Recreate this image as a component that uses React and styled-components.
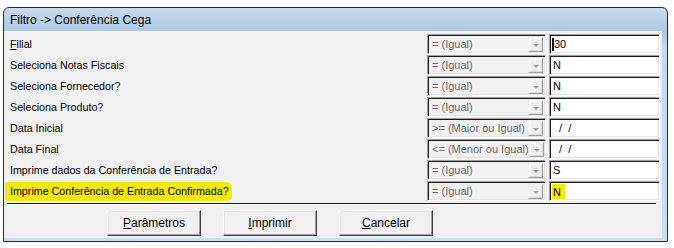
import styled, { createGlobalStyle } from "styled-components";

const GlobalStyle = createGlobalStyle`
    body {
        margin: 0;
        background: #ffffff;
        font-family: "Liberation Sans", Arial, sans-serif;
    }
`

const filtros = [
    { label: "Filial", atalho: "F", operador: "= (Igual)", valor: "30", cursor: true },
    { label: "Seleciona Notas Fiscais", operador: "= (Igual)", valor: "N" },
    { label: "Seleciona Fornecedor?", operador: "= (Igual)", valor: "N" },
    { label: "Seleciona Produto?", operador: "= (Igual)", valor: "N" },
    { label: "Data Inicial", operador: ">= (Maior ou Igual)", valor: "  /  /" },
    { label: "Data Final", operador: "<= (Menor ou Igual)", valor: "  /  /" },
    { label: "Imprime dados da Conferência de Entrada?", operador: "= (Igual)", valor: "S" },
    { label: "Imprime Conferência de Entrada Confirmada?", operador: "= (Igual)", valor: "N", marcado: true },
]

function Sublinhado({ texto }) {
    return <><u>{texto[0]}</u>{texto.slice(1)}</>
}

export default function App() {
    return (
        <>
            <GlobalStyle />
            <Janela>
                <Titulo>Filtro -&gt; Conferência Cega</Titulo>
                <Corpo>
                    <Grade>
                        {filtros.map((f) => (
                            <Linha key={f.label}>
                                <Rotulo marcado={f.marcado}>
                                    {f.atalho ? <Sublinhado texto={f.label} /> : f.label}
                                </Rotulo>
                                <Combo>
                                    <span>{f.operador}</span>
                                    <Seta />
                                </Combo>
                                <Campo>
                                    {f.cursor && <Cursor />}
                                    <Valor marcado={f.marcado}>{f.valor}</Valor>
                                </Campo>
                            </Linha>
                        ))}
                    </Grade>
                    <Separador />
                    <Botoes>
                        <Botao><Sublinhado texto="Parâmetros" /></Botao>
                        <Botao><Sublinhado texto="Imprimir" /></Botao>
                        <Botao><Sublinhado texto="Cancelar" /></Botao>
                    </Botoes>
                </Corpo>
            </Janela>
        </>
    )
}

const Janela = styled.div`
    box-sizing: border-box;
    margin: 7px 0 0 3px;
    width: 665px;
    border: 1px solid #1c2b3a;
    border-radius: 6px 6px 0 0;
    background: linear-gradient(180deg, #c6daf0 0px, #abc7e4 24px, #c2d9ef 40px, #c8def2 100%);
    padding: 0 5px 3px 0;
`

const Titulo = styled.div`
    height: 23px;
    display: flex;
    align-items: center;
    padding-left: 6px;
    font-size: 12px;
    color: #000;
`

const Corpo = styled.div`
    background: #f0f0f0;
    padding: 3px 2px 2px 6px;
`

const Grade = styled.div`
    display: flex;
    flex-direction: column;
    gap: 1px;
`

const Linha = styled.div`
    display: grid;
    grid-template-columns: 1fr 119px 111px;
    column-gap: 3px;
    height: 20px;
    align-items: center;
`

const Rotulo = styled.div`
    font-size: 10.7px;
    color: #000;
    white-space: nowrap;
    justify-self: start;
    margin-left: ${({ marcado }) => marcado ? "-5px" : "0"};
    padding: ${({ marcado }) => marcado ? "3px 3px 4px 5px" : "0"};
    background: ${({ marcado }) => marcado ? "#f3ea0a" : "transparent"};
    border-radius: ${({ marcado }) => marcado ? "2px 6px 5px 2px" : "0"};
`

const Afundado = styled.div`
    height: 20px;
    box-sizing: border-box;
    border-top: 1px solid #a0a0a0;
    border-left: 1px solid #a0a0a0;
    border-right: 1px solid #ffffff;
    border-bottom: 1px solid #ffffff;
    box-shadow: inset 1px 1px 0 #1a1a1a, inset -1px -1px 0 #e3e3e3;
    display: flex;
    align-items: center;
    font-size: 11px;
    white-space: nowrap;
`

const Combo = styled(Afundado)`
    background: #f0f0f0;
    color: #6a6a6a;
    justify-content: space-between;
    padding: 0 2px 0 4px;
    overflow: hidden;
`

const Seta = styled.div`
    flex: none;
    width: 15px;
    height: 15px;
    box-sizing: border-box;
    border-top: 1px solid #f0f0f0;
    border-left: 1px solid #f0f0f0;
    border-right: 1px solid #a0a0a0;
    border-bottom: 1px solid #a0a0a0;
    box-shadow: inset 1px 1px 0 #ffffff, inset -1px -1px 0 #d8d8d8;
    position: relative;
    &::after {
        content: "";
        position: absolute;
        left: 4px;
        top: 6px;
        border-left: 3px solid transparent;
        border-right: 3px solid transparent;
        border-top: 3px solid #a0a0a0;
    }
`

const Campo = styled(Afundado)`
    background: #ffffff;
    color: #000;
    padding-left: 2px;
`

const Cursor = styled.div`
    width: 2px;
    height: 13px;
    background: #000;
    margin-right: -1px;
`

const Valor = styled.span`
    white-space: pre;
    padding: ${({ marcado }) => marcado ? "2px 4px 1px 1px" : "0 0 0 1px"};
    background: ${({ marcado }) => marcado ? "#f3ea0a" : "transparent"};
`

const Separador = styled.div`
    margin: 2px 4px 0 -3px;
    border-top: 1px solid #1a1a1a;
    border-bottom: 1px solid #ffffff;
`

const Botoes = styled.div`
    display: flex;
    gap: 22px;
    padding: 5px 0 0 97px;
`

const Botao = styled.button`
    width: 94px;
    height: 26px;
    background: #f0f0f0;
    font-family: "Liberation Sans", Arial, sans-serif;
    font-size: 12px;
    color: #000;
    border-top: 1px solid #ffffff;
    border-left: 1px solid #ffffff;
    border-right: 1px solid #404040;
    border-bottom: 1px solid #404040;
    box-shadow: inset -1px -1px 0 #a0a0a0, inset 1px 1px 0 #e3e3e3;
    padding: 0;
`
